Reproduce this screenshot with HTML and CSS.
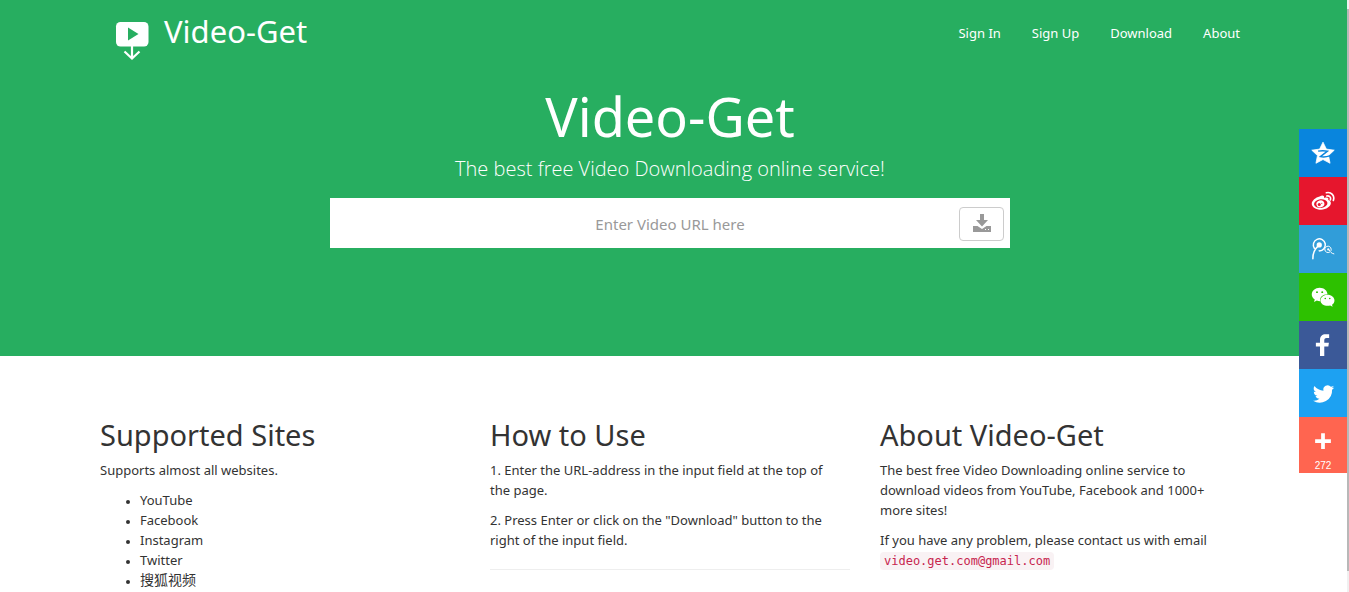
FILE: index.html
```html
<!DOCTYPE html>
<html lang="en">
    <head>
        <meta charset="UTF-8" />
        <meta name="viewport" content="width=device-width, initial-scale=1.0" />
        <title>Video-Get</title>
        <link rel="stylesheet" href="styles.css">
    </head>
    <body>
        <header class="hero">
            <nav class="container navbar">
                <a class="brand" href="#">
                    <svg class="brand-logo" viewBox="0 0 34 40" aria-hidden="true">
                        <rect x="1" y="1" width="32.500" height="24.500" rx="4.500" fill="#fff" />
                        <path d="M13 6.500l10.500 6.500L13 19.500z" fill="#27ae60" />
                        <path d="M17 25v12.500M9.500 30.500l7.500 7L24.500 30.500" fill="none" stroke="#fff" stroke-width="2.200" />
                    </svg>
                    <span>Video-Get</span>
                </a>
                <ul class="nav-links">
                    <li><a href="#">Sign In</a></li>
                    <li><a href="#">Sign Up</a></li>
                    <li><a href="#">Download</a></li>
                    <li><a href="#">About</a></li>
                </ul>
            </nav>
            <div class="container intro">
                <h1>Video-Get</h1>
                <p class="lead">The best free Video Downloading online service!</p>
                <form class="url-form">
                    <input class="url-input" type="text" placeholder="Enter Video URL here" aria-label="Video URL" />
                    <button class="url-button" type="submit" aria-label="Download">
                        <svg viewBox="0 0 20 20" width="20" height="20" aria-hidden="true">
                            <path d="M8 0h4v6h4l-6 6.500L4 6h4z" fill="#999" />
                            <path d="M1 12h4.500l4.500 3 4.500-3H19v6H1zM13 15v1h1v-1zM16 15v1h1v-1z" fill="#999" fill-rule="evenodd" />
                        </svg>
                    </button>
                </form>
            </div>
        </header>

        <main class="container columns">
            <section>
                <h2>Supported Sites</h2>
                <p>Supports almost all websites.</p>
                <ul class="sites">
                    <li>YouTube</li>
                    <li>Facebook</li>
                    <li>Instagram</li>
                    <li>Twitter</li>
                    <li lang="zh"><span class="zh">搜狐视频</span></li>
                </ul>
            </section>
            <section>
                <h2>How to Use</h2>
                <p>1. Enter the URL-address in the input field at the top of the page.</p>
                <p>2. Press Enter or click on the "Download" button to the right of the input field.</p>
                <hr />
            </section>
            <section>
                <h2>About Video-Get</h2>
                <p>The best free Video Downloading online service to download videos from YouTube, Facebook and 1000+ more sites!</p>
                <p>If you have any problem, please contact us with email <code>video.get.com@gmail.com</code></p>
            </section>
        </main>

        <!-- share buttons, fixed to the right edge -->
        <aside class="share">
            <a class="qzone" href="#" aria-label="QZone">
                <svg viewBox="0 0 32 32" aria-hidden="true">
                    <path d="M16 1.500l4.500 9.300 10.500 1.400-7.600 7.200 2 10.300-9.400-5-9.400 5 2-10.300L1 12.200l10.500-1.400z" fill="#fff" stroke="#fff" stroke-linejoin="round" />
                    <path d="M9.500 13.500c4.500-.9 8.500-.7 12.500 0l-9.500 7.300c4.500.9 8 .5 12.500-1" fill="none" stroke="#0985dd" stroke-width="1.900" />
                </svg>
            </a>
            <a class="weibo" href="#" aria-label="Weibo">
                <svg viewBox="0 0 32 32" aria-hidden="true">
                    <path d="M11.500 10c3.500-2 6.500-1.600 6 2 3.400-1.200 6.600-.8 5.500 2.500 2.400.8 3.500 2.200 3.500 4.300 0 4.700-6.200 8.700-13 8.700S1 24 1 19.500C1 16 6 11 11.500 10z" fill="#fff" />
                    <ellipse cx="13" cy="19.500" rx="9" ry="5.800" transform="rotate(-8 13 19.500)" fill="#e6162d" />
                    <ellipse cx="12.500" cy="19.800" rx="5.400" ry="4.700" transform="rotate(-15 12.500 19.800)" fill="#fff" />
                    <circle cx="11" cy="20.800" r="2" fill="#e6162d" />
                    <circle cx="14.300" cy="19" r=".8" fill="#e6162d" />
                    <path d="M20.500 5c6.500-1.500 11.500 4 9.300 10.200M21 9.300c3.300-.7 6 1.800 4.800 5.200" fill="none" stroke="#fff" stroke-width="2.200" stroke-linecap="round" />
                </svg>
            </a>
            <a class="tqq" href="#" aria-label="Tencent Weibo">
                <svg viewBox="0 0 32 32" aria-hidden="true">
                    <g fill="none" stroke="#fff" stroke-linecap="round">
                        <path d="M4.500 15a8 8 0 1 1 6.500 3.500M10 11.500C5 16 2.200 21 2.500 29" stroke-width="2" />
                        <path d="M24.500 20.500a4.300 4.300 0 1 1 2.300-2.500M24 17c1.500 3 3.500 5 6.500 5.500" stroke-width="1.300" />
                    </g>
                    <circle cx="11" cy="10.500" r="3.500" fill="#fff" />
                    <circle cx="23" cy="16.500" r="1.500" fill="#fff" />
                </svg>
            </a>
            <a class="wechat" href="#" aria-label="WeChat">
                <svg viewBox="0 0 32 32" aria-hidden="true">
                    <path d="M11.500 3.500c5.800 0 10.300 3.800 10.500 8.700-6.300 0-11 4-9.500 9.300-1.700.1-3.300-.2-4.700-.7L4 22.700l1-3.500C2.500 17.500 1 15 1 12.500 1 7.500 5.700 3.500 11.500 3.500z" fill="#fff" />
                    <path d="M22 13c5.200 0 9.300 3.400 9.300 7.500 0 2.300-1.300 4.300-3.300 5.700l.8 2.900-3.200-1.700c-6.600 1.700-12.900-1.900-12.900-6.900C12.700 16.400 16.800 13 22 13z" fill="#fff" />
                    <g fill="#2dc100">
                        <circle cx="8" cy="9.500" r="1.300" />
                        <circle cx="15" cy="9.500" r="1.300" />
                        <circle cx="19" cy="18" r="1.100" />
                        <circle cx="25" cy="18" r="1.100" />
                    </g>
                </svg>
            </a>
            <a class="facebook" href="#" aria-label="Facebook">
                <svg viewBox="0 0 32 32" aria-hidden="true">
                    <path d="M12 30.500V18H6.500v-5H12V9.500C12 4 15 1.500 19.500 1.500c2 0 3.500.1 4.700.3v5h-3.300c-2.600 0-3.200 1.200-3.200 3.200v3h6.200l-.8 5h-5.400v12.500z" fill="#fff" />
                </svg>
            </a>
            <a class="twitter" href="#" aria-label="Twitter">
                <svg viewBox="0 0 32 32" aria-hidden="true">
                    <path d="M31 8.500a12 12 0 0 1-3.300.9 5.800 5.800 0 0 0 2.500-3.200 12 12 0 0 1-3.700 1.400 5.800 5.800 0 0 0-9.900 5.300A16.500 16.500 0 0 1 4.600 6.800a5.800 5.800 0 0 0 1.800 7.800 6 6 0 0 1-2.600-.7 5.800 5.800 0 0 0 4.700 5.800 6 6 0 0 1-2.600.1 5.800 5.800 0 0 0 5.400 4A11.700 11.700 0 0 1 2.700 26.200 16.500 16.500 0 0 0 28.100 11.500 12 12 0 0 0 31 8.500z" fill="#fff" />
                </svg>
            </a>
            <a class="more" href="#" aria-label="More, 272 shares">
                <svg viewBox="0 0 32 32" aria-hidden="true">
                    <path d="M13.500 5.500h5v8h8v5h-8v8h-5v-8h-8v-5h8z" fill="#fff" />
                </svg>
                <span>272</span>
            </a>
        </aside>
    </body>
</html>
```
FILE: styles.css
```css
* {
    box-sizing: border-box;
}

body {
    margin: 0;
    padding: 0;
    font-family: "Noto Sans", "Noto Sans CJK SC", sans-serif;
    font-size: 13px;
    line-height: 20px;
    color: #333;
    background-color: #fff;
}

/* thin scroll track on the right edge */
body::after {
    content: "";
    position: fixed;
    top: 0;
    right: 0;
    bottom: 0;
    width: 2px;
    background: linear-gradient(#b8b8b8, #b8b8b8) 0 9px / 2px 95% no-repeat #f0f0f0;
}

a {
    color: inherit;
    text-decoration: none;
}

.hero,
.columns {
    padding-right: 9px;
}

.container {
    max-width: 1140px;
    margin: 0 auto;
}

.hero {
    padding-bottom: 108px;
    color: #fff;
    background-color: #27ae60;
}

.navbar {
    display: flex;
    justify-content: space-between;
    height: 66px;
    padding: 0 0 0 15px;
}

.brand {
    display: flex;
    gap: 15px;
    font-size: 31px;
    line-height: 62px;
}

.brand-logo {
    width: 34px;
    height: 40px;
    margin-top: 21px;
}

.nav-links {
    display: flex;
    gap: 31px;
    margin: 0;
    padding: 23px 0 0;
    list-style: none;
}

.intro {
    display: flex;
    flex-direction: column;
    align-items: center;
    padding-top: 20px;
}

h1,
h2 {
    margin: 0;
    font-weight: 400;
}

h1 {
    font-size: 54px;
    line-height: 60px;
}

.lead {
    margin: 8px 0 14px;
    font-family: "Open Sans", sans-serif;
    font-size: 20px;
    font-weight: 300;
    line-height: 30px;
}

.url-form {
    position: relative;
    width: 100%;
    max-width: 680px;
}

.url-input {
    display: block;
    width: 100%;
    height: 50px;
    padding: 2px 56px 0;
    border: 0;
    font: inherit;
    font-size: 15px;
    text-align: center;
    background-color: #fff;
}

.url-input::placeholder {
    color: #999;
    opacity: 1;
}

/* sits over the right end of the input */
.url-button {
    position: absolute;
    top: 9px;
    right: 6px;
    display: flex;
    align-items: center;
    justify-content: center;
    width: 45px;
    height: 34px;
    padding: 0;
    border: 1px solid #ccc;
    border-radius: 4px;
    background-color: #fff;
}

.columns {
    display: grid;
    grid-template-columns: repeat(3, 1fr);
    gap: 30px;
    max-width: 1149px;
    padding-top: 62px;
}

h2 {
    margin-bottom: 9px;
    font-size: 29px;
    line-height: 33px;
}

p {
    margin: 0 0 10px;
}

.columns p {
    padding-right: 16px;
}

.sites {
    margin: 0;
    padding-left: 40px;
}

.sites li::marker {
    font-size: 10px;
}

.zh {
    font-size: 14px;
}

hr {
    margin: 19px 0 0;
    border: 0;
    border-top: 1px solid #eee;
}

code {
    padding: 2px 4px;
    border-radius: 4px;
    font-family: "DejaVu Sans Mono", monospace;
    font-size: 12px;
    line-height: 18px;
    color: #c7254e;
    background-color: #f9f2f4;
}

.share {
    position: fixed;
    top: 129px;
    right: 2px;
    width: 48px;
}

.share a {
    display: flex;
    flex-direction: column;
    align-items: center;
    padding: 12px 0;
    color: #fff;
}

.share svg {
    width: 24px;
    height: 24px;
}

.share span {
    font-family: "Liberation Sans", sans-serif;
    font-size: 10px;
    line-height: 12px;
}

.qzone {
    background-color: #0985dd;
}

.weibo {
    background-color: #e6162d;
}

.tqq {
    background-color: #319dd9;
}

.wechat {
    background-color: #2dc100;
}

.facebook {
    background-color: #3b5998;
}

.twitter {
    background-color: #1da1f2;
}

.share .more {
    padding-bottom: 1px;
    gap: 7px;
    background-color: #ff6550;
}
```
